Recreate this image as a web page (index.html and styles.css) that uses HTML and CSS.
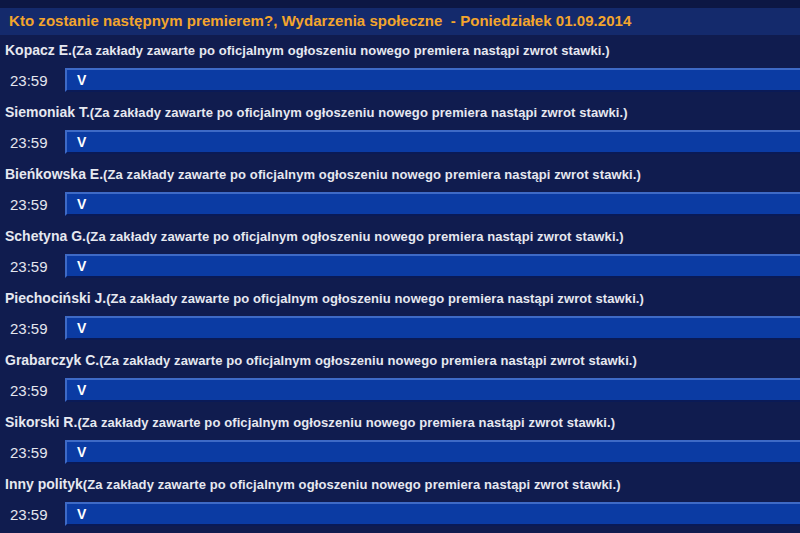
FILE: index.html
```html
<!DOCTYPE html>
<html lang="pl">
<head>
<meta charset="utf-8">
<link rel="stylesheet" href="styles.css">
</head>
<body>
<div class="page">
  <div class="topstrip"></div>
  <div class="header">Kto zostanie następnym premierem?, Wydarzenia społeczne&nbsp; - Poniedziałek 01.09.2014</div>
  <div class="list">
    <div class="row">
      <div class="name">Kopacz E.<span class="note">(Za zakłady zawarte po oficjalnym ogłoszeniu nowego premiera nastąpi zwrot stawki.)</span></div>
      <div class="line"><span class="time">23:59</span><div class="bar">V</div></div>
    </div>
    <div class="row">
      <div class="name">Siemoniak T.<span class="note">(Za zakłady zawarte po oficjalnym ogłoszeniu nowego premiera nastąpi zwrot stawki.)</span></div>
      <div class="line"><span class="time">23:59</span><div class="bar">V</div></div>
    </div>
    <div class="row">
      <div class="name">Bieńkowska E.<span class="note">(Za zakłady zawarte po oficjalnym ogłoszeniu nowego premiera nastąpi zwrot stawki.)</span></div>
      <div class="line"><span class="time">23:59</span><div class="bar">V</div></div>
    </div>
    <div class="row">
      <div class="name">Schetyna G.<span class="note">(Za zakłady zawarte po oficjalnym ogłoszeniu nowego premiera nastąpi zwrot stawki.)</span></div>
      <div class="line"><span class="time">23:59</span><div class="bar">V</div></div>
    </div>
    <div class="row">
      <div class="name">Piechociński J.<span class="note">(Za zakłady zawarte po oficjalnym ogłoszeniu nowego premiera nastąpi zwrot stawki.)</span></div>
      <div class="line"><span class="time">23:59</span><div class="bar">V</div></div>
    </div>
    <div class="row">
      <div class="name">Grabarczyk C.<span class="note">(Za zakłady zawarte po oficjalnym ogłoszeniu nowego premiera nastąpi zwrot stawki.)</span></div>
      <div class="line"><span class="time">23:59</span><div class="bar">V</div></div>
    </div>
    <div class="row">
      <div class="name">Sikorski R.<span class="note">(Za zakłady zawarte po oficjalnym ogłoszeniu nowego premiera nastąpi zwrot stawki.)</span></div>
      <div class="line"><span class="time">23:59</span><div class="bar">V</div></div>
    </div>
    <div class="row">
      <div class="name">Inny polityk<span class="note">(Za zakłady zawarte po oficjalnym ogłoszeniu nowego premiera nastąpi zwrot stawki.)</span></div>
      <div class="line"><span class="time">23:59</span><div class="bar">V</div></div>
    </div>
  </div>
</div>
</body>
</html>
```

FILE: styles.css
```css
html, body {
  margin: 0;
  padding: 0;
  background: #101c4f;
  font-family: "Liberation Sans", Arial, sans-serif;
}
.page {
  width: 800px;
  height: 533px;
  overflow: hidden;
  background: #101c4f;
}
.topstrip {
  height: 8px;
  background: #0c1744;
}
.header {
  height: 27px;
  line-height: 26px;
  padding-left: 9px;
  background: #142a6c;
  color: #f3a52c;
  font-weight: bold;
  font-size: 15px;
  letter-spacing: 0.05px;
  white-space: nowrap;
}
.row {
  height: 62px;
}
.name {
  height: 31px;
  line-height: 31px;
  padding-left: 5px;
  color: #e6e8f0;
  font-weight: bold;
  font-size: 14px;
  white-space: nowrap;
}
.note {
  font-size: 13px;
  letter-spacing: 0.1px;
}
.line {
  margin-top: 2px;
  display: flex;
  align-items: center;
  height: 24px;
}
.time {
  width: 65px;
  padding-left: 10px;
  box-sizing: border-box;
  color: #e4e6ee;
  font-size: 15px;
}
.bar {
  flex: 1;
  height: 24px;
  box-sizing: border-box;
  border-top: 2px solid #3e6ac6;
  border-left: 2px solid #3e6ac6;
  border-bottom: 2px solid #0a1a56;
  background: #0b3ba3;
  color: #ffffff;
  font-weight: bold;
  font-size: 14px;
  line-height: 20px;
  padding-left: 10px;
}
```
